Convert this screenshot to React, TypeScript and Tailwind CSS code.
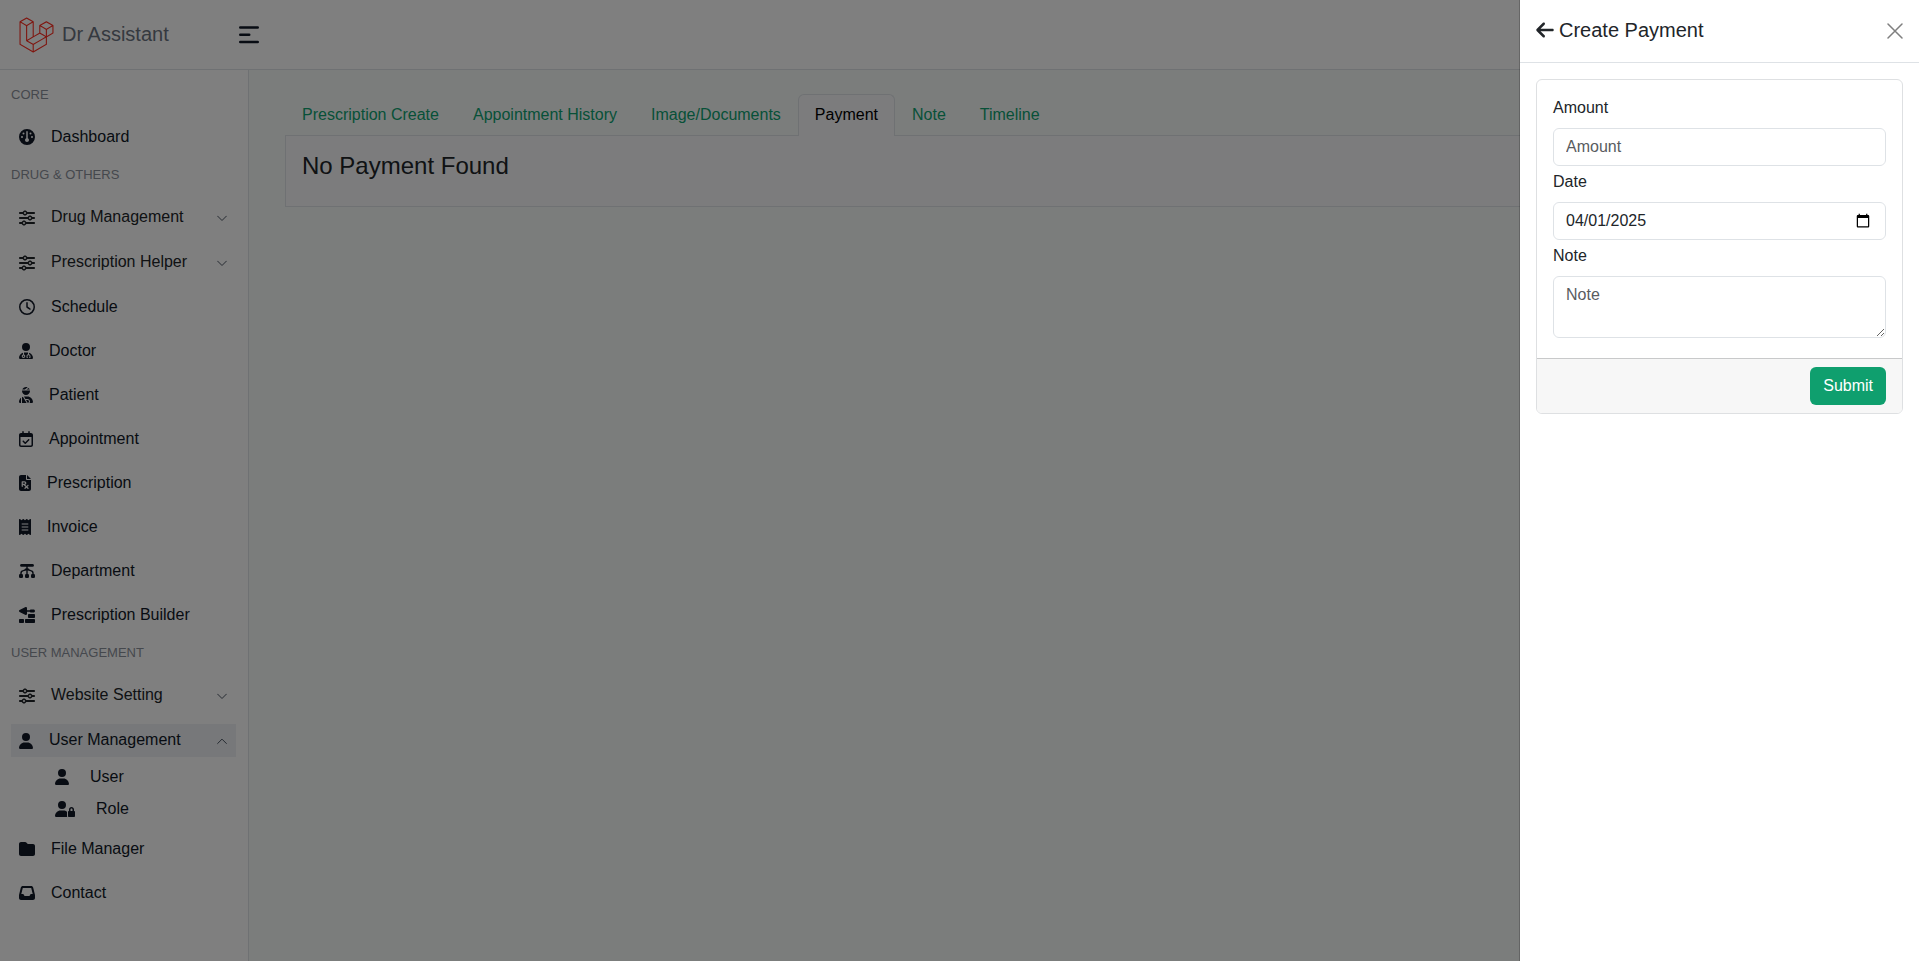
import type { ReactNode } from "react";
import {
  FaArrowLeft,
  FaFilePrescription,
  FaFolder,
  FaGauge,
  FaInbox,
  FaReceipt,
  FaRegCalendarCheck,
  FaRegClock,
  FaSliders,
  FaTrowelBricks,
  FaUser,
  FaUserDoctor,
  FaUserInjured,
  FaUserLock,
} from "react-icons/fa6";
import { SiLaravel } from "react-icons/si";

function Chevron({ up = false }: { up?: boolean }) {
  return (
    <svg viewBox="0 0 16 16" className="ml-auto h-2.5 w-2.5 text-[#4b5563]" fill="none" stroke="currentColor" strokeWidth="1.6" strokeLinecap="round" strokeLinejoin="round">
      <path d={up ? "M1 12 L8 5 L15 12" : "M1 5 L8 12 L15 5"} />
    </svg>
  );
}

function DepartmentIcon() {
  return (
    <svg viewBox="0 0 16 16" className="h-4 w-4" fill="none" stroke="currentColor">
      <path d="M2.5 2.4 H13.5" strokeWidth="2.8" strokeLinecap="round" />
      <path d="M8 3 V12 M2 12 V10.3 Q2 8 4.2 7.6 L8 6.6 L11.8 7.6 Q14 8 14 10.3 V12 M5.6 7.4 Q6 5.8 8 5.6 Q10 5.8 10.4 7.4" strokeWidth="1.4" />
      <g fill="currentColor" stroke="none">
        <rect x="0" y="11" width="4" height="4" rx="1.3" />
        <rect x="6" y="11" width="4" height="4" rx="1.3" />
        <rect x="12" y="11" width="4" height="4" rx="1.3" />
      </g>
    </svg>
  );
}

function Heading({ children }: { children: ReactNode }) {
  return <h2 className="flex h-9 items-center pb-1 text-[13px] text-[#8b909a]">{children}</h2>;
}

function NavLink({ icon, label }: { icon: ReactNode; label: string }) {
  return (
    <a href="#" className="flex h-11 items-center gap-4 px-2 text-[#111827]">
      {icon}
      <span>{label}</span>
    </a>
  );
}

function NavGroup({ label }: { label: string }) {
  return (
    <button type="button" className="flex h-[45px] w-full items-center gap-4 px-2 pr-[9px] text-left text-[#212529]">
      <FaSliders className="h-4 w-4" />
      <span className="pb-0.5">{label}</span>
      <Chevron />
    </button>
  );
}

function SubLink({ icon, label }: { icon: ReactNode; label: string }) {
  return (
    <a href="#" className="flex h-8 items-center gap-[21px] pl-11 text-[#111827]">
      {icon}
      <span>{label}</span>
    </a>
  );
}

function Sidebar() {
  return (
    <aside className="w-[249px] shrink-0 border-r border-[#dee2e6] bg-white pt-[9px] pr-3 pl-[11px]">
      <nav>
        <Heading>CORE</Heading>
        <NavLink icon={<FaGauge className="h-4 w-4" />} label="Dashboard" />
        <Heading>DRUG &amp; OTHERS</Heading>
        <NavGroup label="Drug Management" />
        <NavGroup label="Prescription Helper" />
        <NavLink icon={<FaRegClock className="h-4 w-4" />} label="Schedule" />
        <NavLink icon={<FaUserDoctor className="h-4 w-3.5" />} label="Doctor" />
        <NavLink icon={<FaUserInjured className="h-4 w-3.5" />} label="Patient" />
        <NavLink icon={<FaRegCalendarCheck className="h-4 w-3.5" />} label="Appointment" />
        <NavLink icon={<FaFilePrescription className="h-4 w-3" />} label="Prescription" />
        <NavLink icon={<FaReceipt className="h-4 w-3" />} label="Invoice" />
        <NavLink icon={<DepartmentIcon />} label="Department" />
        <NavLink icon={<FaTrowelBricks className="h-4 w-4" />} label="Prescription Builder" />
        <Heading>USER MANAGEMENT</Heading>
        <NavGroup label="Website Setting" />
        <div className="pt-1.5 pb-0.5">
          <button type="button" className="flex h-[33px] w-full items-center gap-4 bg-[#eef0f4] px-2 pr-[9px] text-left text-[#111827]">
            <FaUser className="h-4 w-3.5" />
            <span className="pb-0.5">User Management</span>
            <Chevron up />
          </button>
          <div className="pt-1">
            <SubLink icon={<FaUser className="h-4 w-3.5" />} label="User" />
            <SubLink icon={<FaUserLock className="h-4 w-5" />} label="Role" />
          </div>
        </div>
        <NavLink icon={<FaFolder className="h-4 w-4" />} label="File Manager" />
        <NavLink icon={<FaInbox className="h-4 w-4" />} label="Contact" />
      </nav>
    </aside>
  );
}

const tabs = ["Prescription Create", "Appointment History", "Image/Documents", "Payment", "Note", "Timeline"];

function Tabs() {
  return (
    <div role="tablist" className="flex border-b border-[#dee2e6]">
      {tabs.map((tab) => (
        <button
          key={tab}
          type="button"
          role="tab"
          aria-selected={tab === "Payment"}
          className={
            tab === "Payment"
              ? "-mb-px rounded-t-md border border-b-0 border-[#dee2e6] bg-[#f8f9fa] px-4 pt-2 pb-[9px] text-black"
              : "border border-b-0 border-transparent px-4 py-2 text-[#0ea271]"
          }
        >
          {tab}
        </button>
      ))}
    </div>
  );
}

const field = "w-full rounded-md border border-[#dee2e6] bg-white px-3 text-base text-[#212529] placeholder:text-[#595c5f]";
const dateParts =
  "[&::-webkit-datetime-edit-fields-wrapper]:p-0 [&::-webkit-datetime-edit-month-field]:p-0 [&::-webkit-datetime-edit-day-field]:p-0 [&::-webkit-datetime-edit-year-field]:p-0";

function Drawer() {
  return (
    <section role="dialog" aria-labelledby="drawer-title" className="fixed inset-y-0 right-0 w-[400px] border-l border-black/20 bg-white bg-clip-padding text-[#212529]">
      <header className="flex items-center justify-between border-b border-[#dee2e6] p-4">
        <h2 id="drawer-title" className="flex items-center gap-[5px] pb-0.5 text-xl leading-7">
          <FaArrowLeft className="h-5 w-[18px]" />
          Create Payment
        </h2>
        <button type="button" aria-label="Close" className="text-[#7f7f7f]">
          <svg viewBox="0 0 16 16" className="h-4 w-4" stroke="currentColor" strokeWidth="1.5" strokeLinecap="round">
            <path d="M1 1 L15 15 M15 1 L1 15" />
          </svg>
        </button>
      </header>
      <div className="p-4">
        <form className="overflow-hidden rounded-md border border-[#dee0e2]">
          <div className="flex flex-col gap-1 p-4 pb-5">
            <div>
              <label htmlFor="amount" className="mb-2 block">Amount</label>
              <input id="amount" type="text" placeholder="Amount" className={`${field} h-[38px]`} />
            </div>
            <div>
              <label htmlFor="date" className="mb-2 block">Date</label>
              <input id="date" type="date" defaultValue="2025-04-01" className={`${field} ${dateParts} h-[38px]`} />
            </div>
            <div>
              <label htmlFor="note" className="mb-2 block">Note</label>
              <textarea id="note" placeholder="Note" className={`${field} block h-[62px] py-1.5`} />
            </div>
          </div>
          <footer className="flex justify-end border-t border-[#c8c9ca] bg-[#f7f7f7] px-4 py-2">
            <button type="submit" className="h-[38px] rounded-md bg-[#0f9f6e] px-[13px] text-white">Submit</button>
          </footer>
        </form>
      </div>
    </section>
  );
}

export default function App() {
  return (
    <div className="flex min-h-screen flex-col bg-[#f7fbf9] font-['Liberation_Sans',Arial,sans-serif] text-base text-[#212529]">
      <header className="flex h-[70px] items-center border-b border-[#dee2e6] bg-white pl-[19px]">
        <a href="#" className="flex w-[220px] items-center gap-2 text-xl text-[#6b7280]">
          <SiLaravel className="h-9 w-[35px] text-[#ff2d20]" />
          <span className="pb-0.5">Dr Assistant</span>
        </a>
        <button type="button" aria-label="Toggle sidebar" className="text-[#111827]">
          <svg viewBox="0 0 20 18" className="h-[18px] w-5" stroke="currentColor" strokeWidth="2.6" strokeLinecap="round">
            <path d="M1.3 1.5 H18.7 M1.3 8.8 H10.2 M1.3 16 H18.7" />
          </svg>
        </button>
      </header>
      <div className="flex flex-1">
        <Sidebar />
        <main className="min-w-0 flex-1 px-9 pt-6">
          <Tabs />
          <div className="border border-t-0 border-[#dee2e6] bg-[#f8f9fa] p-4 pb-[26px]">
            <h1 className="text-2xl leading-7">No Payment Found</h1>
          </div>
        </main>
      </div>
      <div className="fixed inset-0 bg-black/50" />
      <Drawer />
    </div>
  );
}
